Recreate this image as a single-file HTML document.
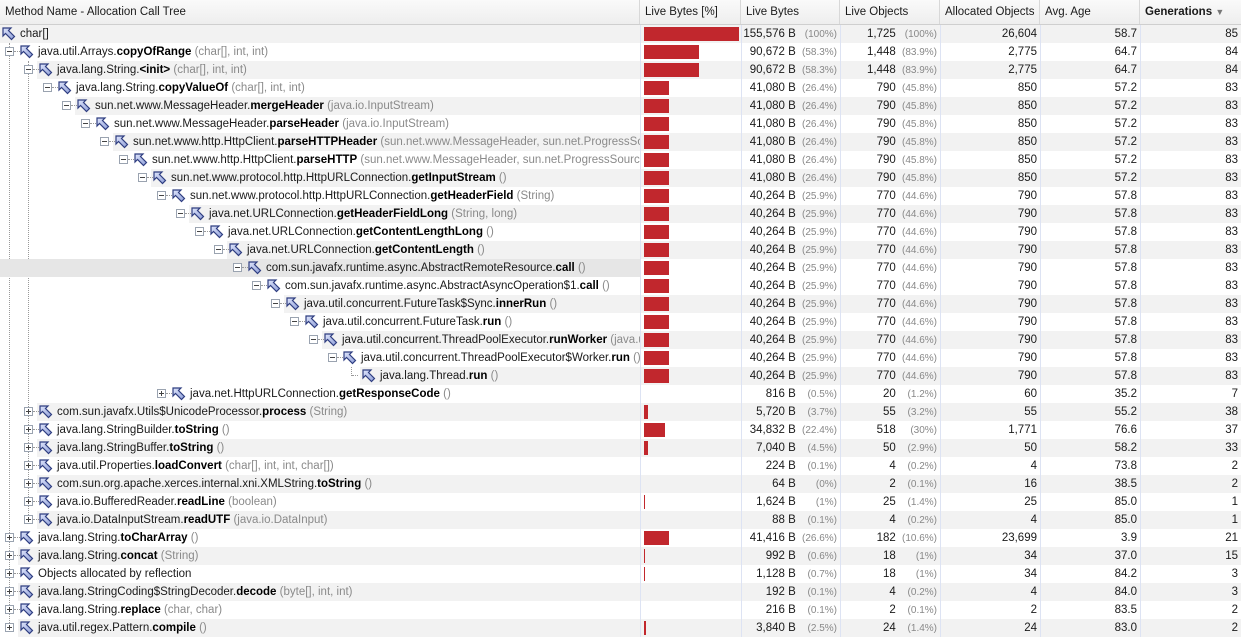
<!DOCTYPE html>
<html><head><meta charset="utf-8"><style>
*{margin:0;padding:0;box-sizing:border-box}
body{width:1241px;height:625px;overflow:hidden;background:#fff;font-family:"Liberation Sans",sans-serif;font-size:11.5px;color:#1a1a1a;position:relative}
.hd{position:absolute;top:0;left:0;width:1241px;height:25px;background:linear-gradient(#fafafa,#eeeeee);border-bottom:1px solid #cfcfcf}
.hd div{position:absolute;top:0;height:24px;line-height:25px;padding-left:5px;border-right:1px solid #d8d8d8}
.r{position:absolute;left:0;width:1241px;height:18px;line-height:18px}
.g .c,.g .tb{background:#f2f2f2}
.s .tb{background:#e6e6e6!important;left:0!important}
.tb{position:absolute;top:0;height:18px;right:601px}
.t{position:absolute;top:0;height:18px;white-space:nowrap;overflow:hidden}
.t svg{position:absolute;left:0;top:2px}
.t span.n{position:absolute;left:18px;top:0}
.a{color:#8a8a8a}
b{font-weight:bold;color:#000}
.c{position:absolute;top:0;height:18px;text-align:right;padding-right:3px;border-left:1px solid #dde3f3}
.p{display:inline-block;width:38px;text-align:right;color:#888;font-size:10px}
.bar{position:absolute;left:3px;top:2px;height:14px;background:#c1272d}
.ex{position:absolute;top:4px;width:9px;height:9px;border:1px solid #9aa3b0;background:#fff}
.ex:before{content:"";position:absolute;left:1px;top:3px;width:5px;height:1px;background:#444}
.ex.pl:after{content:"";position:absolute;left:3px;top:1px;width:1px;height:5px;background:#444}
.hl{position:absolute;top:8px;width:6px;border-top:1px dotted #999}
.vl{position:absolute;border-left:1px dotted #999;width:0}
</style></head><body>
<svg width="0" height="0" style="position:absolute"><defs><linearGradient id="gf" x1="0" y1="0" x2="1" y2="1"><stop offset="0" stop-color="#dfe5fb"/><stop offset="1" stop-color="#8e9ed8"/></linearGradient><symbol id="ic" viewBox="0 0 14 14"><path d="M1 1h8l-2.5 2.5 6 6-3 3-6-6L1 9z" fill="url(#gf)" stroke="#2e3d80" stroke-width="1.2"/></symbol></defs></svg>
<div class="hd">
<div style="left:0;width:640px">Method Name - Allocation Call Tree</div>
<div style="left:640px;width:101px">Live Bytes [%]</div>
<div style="left:741px;width:99px">Live Bytes</div>
<div style="left:840px;width:100px">Live Objects</div>
<div style="left:940px;width:100px">Allocated Objects</div>
<div style="left:1040px;width:100px">Avg. Age</div>
<div style="left:1140px;width:101px;font-weight:bold;border-right:none">Generations <span style="color:#777;font-size:9px">▼</span></div>
</div>
<div class="vl" style="left:9px;top:43px;height:582px"></div>
<div class="vl" style="left:28px;top:61px;height:460px"></div>

<div class="r g" style="top:25px"><div class="tb" style="left:0"></div><div class="t" style="left:2px;width:638px"><svg width="14" height="14"><use href="#ic"/></svg><span class="n">char[]</span></div><div class="c" style="left:640px;width:101px"><div class="bar" style="width:95px"></div></div><div class="c" style="left:741px;width:99px">155,576 B <span class="p">(100%)</span></div><div class="c" style="left:840px;width:100px">1,725 <span class="p">(100%)</span></div><div class="c" style="left:940px;width:100px">26,604</div><div class="c" style="left:1040px;width:100px">58.7</div><div class="c" style="left:1140px;width:101px">85</div></div>

<div class="r" style="top:43px"><div class="ex" style="left:5px"></div><div class="hl" style="left:14px"></div><div class="t" style="left:20px;width:620px"><svg width="14" height="14"><use href="#ic"/></svg><span class="n">java.util.Arrays.<b>copyOfRange</b> <span class="a">(char[], int, int)</span></span></div><div class="c" style="left:640px;width:101px"><div class="bar" style="width:55px"></div></div><div class="c" style="left:741px;width:99px">90,672 B <span class="p">(58.3%)</span></div><div class="c" style="left:840px;width:100px">1,448 <span class="p">(83.9%)</span></div><div class="c" style="left:940px;width:100px">2,775</div><div class="c" style="left:1040px;width:100px">64.7</div><div class="c" style="left:1140px;width:101px">84</div></div>

<div class="r g" style="top:61px"><div class="tb" style="left:37px"></div><div class="ex" style="left:24px"></div><div class="hl" style="left:33px"></div><div class="t" style="left:39px;width:601px"><svg width="14" height="14"><use href="#ic"/></svg><span class="n">java.lang.String.<b>&lt;init&gt;</b> <span class="a">(char[], int, int)</span></span></div><div class="c" style="left:640px;width:101px"><div class="bar" style="width:55px"></div></div><div class="c" style="left:741px;width:99px">90,672 B <span class="p">(58.3%)</span></div><div class="c" style="left:840px;width:100px">1,448 <span class="p">(83.9%)</span></div><div class="c" style="left:940px;width:100px">2,775</div><div class="c" style="left:1040px;width:100px">64.7</div><div class="c" style="left:1140px;width:101px">84</div></div>

<div class="r" style="top:79px"><div class="ex" style="left:43px"></div><div class="hl" style="left:52px"></div><div class="t" style="left:58px;width:582px"><svg width="14" height="14"><use href="#ic"/></svg><span class="n">java.lang.String.<b>copyValueOf</b> <span class="a">(char[], int, int)</span></span></div><div class="c" style="left:640px;width:101px"><div class="bar" style="width:25px"></div></div><div class="c" style="left:741px;width:99px">41,080 B <span class="p">(26.4%)</span></div><div class="c" style="left:840px;width:100px">790 <span class="p">(45.8%)</span></div><div class="c" style="left:940px;width:100px">850</div><div class="c" style="left:1040px;width:100px">57.2</div><div class="c" style="left:1140px;width:101px">83</div></div>

<div class="r g" style="top:97px"><div class="tb" style="left:75px"></div><div class="ex" style="left:62px"></div><div class="hl" style="left:71px"></div><div class="t" style="left:77px;width:563px"><svg width="14" height="14"><use href="#ic"/></svg><span class="n">sun.net.www.MessageHeader.<b>mergeHeader</b> <span class="a">(java.io.InputStream)</span></span></div><div class="c" style="left:640px;width:101px"><div class="bar" style="width:25px"></div></div><div class="c" style="left:741px;width:99px">41,080 B <span class="p">(26.4%)</span></div><div class="c" style="left:840px;width:100px">790 <span class="p">(45.8%)</span></div><div class="c" style="left:940px;width:100px">850</div><div class="c" style="left:1040px;width:100px">57.2</div><div class="c" style="left:1140px;width:101px">83</div></div>

<div class="r" style="top:115px"><div class="ex" style="left:81px"></div><div class="hl" style="left:90px"></div><div class="t" style="left:96px;width:544px"><svg width="14" height="14"><use href="#ic"/></svg><span class="n">sun.net.www.MessageHeader.<b>parseHeader</b> <span class="a">(java.io.InputStream)</span></span></div><div class="c" style="left:640px;width:101px"><div class="bar" style="width:25px"></div></div><div class="c" style="left:741px;width:99px">41,080 B <span class="p">(26.4%)</span></div><div class="c" style="left:840px;width:100px">790 <span class="p">(45.8%)</span></div><div class="c" style="left:940px;width:100px">850</div><div class="c" style="left:1040px;width:100px">57.2</div><div class="c" style="left:1140px;width:101px">83</div></div>

<div class="r g" style="top:133px"><div class="tb" style="left:113px"></div><div class="ex" style="left:100px"></div><div class="hl" style="left:109px"></div><div class="t" style="left:115px;width:525px"><svg width="14" height="14"><use href="#ic"/></svg><span class="n">sun.net.www.http.HttpClient.<b>parseHTTPHeader</b> <span class="a">(sun.net.www.MessageHeader, sun.net.ProgressSource)</span></span></div><div class="c" style="left:640px;width:101px"><div class="bar" style="width:25px"></div></div><div class="c" style="left:741px;width:99px">41,080 B <span class="p">(26.4%)</span></div><div class="c" style="left:840px;width:100px">790 <span class="p">(45.8%)</span></div><div class="c" style="left:940px;width:100px">850</div><div class="c" style="left:1040px;width:100px">57.2</div><div class="c" style="left:1140px;width:101px">83</div></div>

<div class="r" style="top:151px"><div class="ex" style="left:119px"></div><div class="hl" style="left:128px"></div><div class="t" style="left:134px;width:506px"><svg width="14" height="14"><use href="#ic"/></svg><span class="n">sun.net.www.http.HttpClient.<b>parseHTTP</b> <span class="a">(sun.net.www.MessageHeader, sun.net.ProgressSource, sun</span></span></div><div class="c" style="left:640px;width:101px"><div class="bar" style="width:25px"></div></div><div class="c" style="left:741px;width:99px">41,080 B <span class="p">(26.4%)</span></div><div class="c" style="left:840px;width:100px">790 <span class="p">(45.8%)</span></div><div class="c" style="left:940px;width:100px">850</div><div class="c" style="left:1040px;width:100px">57.2</div><div class="c" style="left:1140px;width:101px">83</div></div>

<div class="r g" style="top:169px"><div class="tb" style="left:151px"></div><div class="ex" style="left:138px"></div><div class="hl" style="left:147px"></div><div class="t" style="left:153px;width:487px"><svg width="14" height="14"><use href="#ic"/></svg><span class="n">sun.net.www.protocol.http.HttpURLConnection.<b>getInputStream</b> <span class="a">()</span></span></div><div class="c" style="left:640px;width:101px"><div class="bar" style="width:25px"></div></div><div class="c" style="left:741px;width:99px">41,080 B <span class="p">(26.4%)</span></div><div class="c" style="left:840px;width:100px">790 <span class="p">(45.8%)</span></div><div class="c" style="left:940px;width:100px">850</div><div class="c" style="left:1040px;width:100px">57.2</div><div class="c" style="left:1140px;width:101px">83</div></div>

<div class="r" style="top:187px"><div class="ex" style="left:157px"></div><div class="hl" style="left:166px"></div><div class="t" style="left:172px;width:468px"><svg width="14" height="14"><use href="#ic"/></svg><span class="n">sun.net.www.protocol.http.HttpURLConnection.<b>getHeaderField</b> <span class="a">(String)</span></span></div><div class="c" style="left:640px;width:101px"><div class="bar" style="width:25px"></div></div><div class="c" style="left:741px;width:99px">40,264 B <span class="p">(25.9%)</span></div><div class="c" style="left:840px;width:100px">770 <span class="p">(44.6%)</span></div><div class="c" style="left:940px;width:100px">790</div><div class="c" style="left:1040px;width:100px">57.8</div><div class="c" style="left:1140px;width:101px">83</div></div>

<div class="r g" style="top:205px"><div class="tb" style="left:189px"></div><div class="ex" style="left:176px"></div><div class="hl" style="left:185px"></div><div class="t" style="left:191px;width:449px"><svg width="14" height="14"><use href="#ic"/></svg><span class="n">java.net.URLConnection.<b>getHeaderFieldLong</b> <span class="a">(String, long)</span></span></div><div class="c" style="left:640px;width:101px"><div class="bar" style="width:25px"></div></div><div class="c" style="left:741px;width:99px">40,264 B <span class="p">(25.9%)</span></div><div class="c" style="left:840px;width:100px">770 <span class="p">(44.6%)</span></div><div class="c" style="left:940px;width:100px">790</div><div class="c" style="left:1040px;width:100px">57.8</div><div class="c" style="left:1140px;width:101px">83</div></div>

<div class="r" style="top:223px"><div class="ex" style="left:195px"></div><div class="hl" style="left:204px"></div><div class="t" style="left:210px;width:430px"><svg width="14" height="14"><use href="#ic"/></svg><span class="n">java.net.URLConnection.<b>getContentLengthLong</b> <span class="a">()</span></span></div><div class="c" style="left:640px;width:101px"><div class="bar" style="width:25px"></div></div><div class="c" style="left:741px;width:99px">40,264 B <span class="p">(25.9%)</span></div><div class="c" style="left:840px;width:100px">770 <span class="p">(44.6%)</span></div><div class="c" style="left:940px;width:100px">790</div><div class="c" style="left:1040px;width:100px">57.8</div><div class="c" style="left:1140px;width:101px">83</div></div>

<div class="r g" style="top:241px"><div class="tb" style="left:227px"></div><div class="ex" style="left:214px"></div><div class="hl" style="left:223px"></div><div class="t" style="left:229px;width:411px"><svg width="14" height="14"><use href="#ic"/></svg><span class="n">java.net.URLConnection.<b>getContentLength</b> <span class="a">()</span></span></div><div class="c" style="left:640px;width:101px"><div class="bar" style="width:25px"></div></div><div class="c" style="left:741px;width:99px">40,264 B <span class="p">(25.9%)</span></div><div class="c" style="left:840px;width:100px">770 <span class="p">(44.6%)</span></div><div class="c" style="left:940px;width:100px">790</div><div class="c" style="left:1040px;width:100px">57.8</div><div class="c" style="left:1140px;width:101px">83</div></div>

<div class="r s" style="top:259px"><div class="tb" style="left:0"></div><div class="ex" style="left:233px"></div><div class="hl" style="left:242px"></div><div class="t" style="left:248px;width:392px"><svg width="14" height="14"><use href="#ic"/></svg><span class="n">com.sun.javafx.runtime.async.AbstractRemoteResource.<b>call</b> <span class="a">()</span></span></div><div class="c" style="left:640px;width:101px"><div class="bar" style="width:25px"></div></div><div class="c" style="left:741px;width:99px">40,264 B <span class="p">(25.9%)</span></div><div class="c" style="left:840px;width:100px">770 <span class="p">(44.6%)</span></div><div class="c" style="left:940px;width:100px">790</div><div class="c" style="left:1040px;width:100px">57.8</div><div class="c" style="left:1140px;width:101px">83</div></div>

<div class="r" style="top:277px"><div class="ex" style="left:252px"></div><div class="hl" style="left:261px"></div><div class="t" style="left:267px;width:373px"><svg width="14" height="14"><use href="#ic"/></svg><span class="n">com.sun.javafx.runtime.async.AbstractAsyncOperation$1.<b>call</b> <span class="a">()</span></span></div><div class="c" style="left:640px;width:101px"><div class="bar" style="width:25px"></div></div><div class="c" style="left:741px;width:99px">40,264 B <span class="p">(25.9%)</span></div><div class="c" style="left:840px;width:100px">770 <span class="p">(44.6%)</span></div><div class="c" style="left:940px;width:100px">790</div><div class="c" style="left:1040px;width:100px">57.8</div><div class="c" style="left:1140px;width:101px">83</div></div>

<div class="r g" style="top:295px"><div class="tb" style="left:284px"></div><div class="ex" style="left:271px"></div><div class="hl" style="left:280px"></div><div class="t" style="left:286px;width:354px"><svg width="14" height="14"><use href="#ic"/></svg><span class="n">java.util.concurrent.FutureTask$Sync.<b>innerRun</b> <span class="a">()</span></span></div><div class="c" style="left:640px;width:101px"><div class="bar" style="width:25px"></div></div><div class="c" style="left:741px;width:99px">40,264 B <span class="p">(25.9%)</span></div><div class="c" style="left:840px;width:100px">770 <span class="p">(44.6%)</span></div><div class="c" style="left:940px;width:100px">790</div><div class="c" style="left:1040px;width:100px">57.8</div><div class="c" style="left:1140px;width:101px">83</div></div>

<div class="r" style="top:313px"><div class="ex" style="left:290px"></div><div class="hl" style="left:299px"></div><div class="t" style="left:305px;width:335px"><svg width="14" height="14"><use href="#ic"/></svg><span class="n">java.util.concurrent.FutureTask.<b>run</b> <span class="a">()</span></span></div><div class="c" style="left:640px;width:101px"><div class="bar" style="width:25px"></div></div><div class="c" style="left:741px;width:99px">40,264 B <span class="p">(25.9%)</span></div><div class="c" style="left:840px;width:100px">770 <span class="p">(44.6%)</span></div><div class="c" style="left:940px;width:100px">790</div><div class="c" style="left:1040px;width:100px">57.8</div><div class="c" style="left:1140px;width:101px">83</div></div>

<div class="r g" style="top:331px"><div class="tb" style="left:322px"></div><div class="ex" style="left:309px"></div><div class="hl" style="left:318px"></div><div class="t" style="left:324px;width:316px"><svg width="14" height="14"><use href="#ic"/></svg><span class="n">java.util.concurrent.ThreadPoolExecutor.<b>runWorker</b> <span class="a">(java.util.concurrent)</span></span></div><div class="c" style="left:640px;width:101px"><div class="bar" style="width:25px"></div></div><div class="c" style="left:741px;width:99px">40,264 B <span class="p">(25.9%)</span></div><div class="c" style="left:840px;width:100px">770 <span class="p">(44.6%)</span></div><div class="c" style="left:940px;width:100px">790</div><div class="c" style="left:1040px;width:100px">57.8</div><div class="c" style="left:1140px;width:101px">83</div></div>

<div class="r" style="top:349px"><div class="ex" style="left:328px"></div><div class="hl" style="left:337px"></div><div class="t" style="left:343px;width:297px"><svg width="14" height="14"><use href="#ic"/></svg><span class="n">java.util.concurrent.ThreadPoolExecutor$Worker.<b>run</b> <span class="a">()</span></span></div><div class="c" style="left:640px;width:101px"><div class="bar" style="width:25px"></div></div><div class="c" style="left:741px;width:99px">40,264 B <span class="p">(25.9%)</span></div><div class="c" style="left:840px;width:100px">770 <span class="p">(44.6%)</span></div><div class="c" style="left:940px;width:100px">790</div><div class="c" style="left:1040px;width:100px">57.8</div><div class="c" style="left:1140px;width:101px">83</div></div>

<div class="r g" style="top:367px"><div class="tb" style="left:360px"></div><div class="vl" style="left:351px;top:0;height:9px"></div><div class="hl" style="left:352px"></div><div class="t" style="left:362px;width:278px"><svg width="14" height="14"><use href="#ic"/></svg><span class="n">java.lang.Thread.<b>run</b> <span class="a">()</span></span></div><div class="c" style="left:640px;width:101px"><div class="bar" style="width:25px"></div></div><div class="c" style="left:741px;width:99px">40,264 B <span class="p">(25.9%)</span></div><div class="c" style="left:840px;width:100px">770 <span class="p">(44.6%)</span></div><div class="c" style="left:940px;width:100px">790</div><div class="c" style="left:1040px;width:100px">57.8</div><div class="c" style="left:1140px;width:101px">83</div></div>

<div class="r" style="top:385px"><div class="ex pl" style="left:157px"></div><div class="hl" style="left:166px"></div><div class="t" style="left:172px;width:468px"><svg width="14" height="14"><use href="#ic"/></svg><span class="n">java.net.HttpURLConnection.<b>getResponseCode</b> <span class="a">()</span></span></div><div class="c" style="left:640px;width:101px"></div><div class="c" style="left:741px;width:99px">816 B <span class="p">(0.5%)</span></div><div class="c" style="left:840px;width:100px">20 <span class="p">(1.2%)</span></div><div class="c" style="left:940px;width:100px">60</div><div class="c" style="left:1040px;width:100px">35.2</div><div class="c" style="left:1140px;width:101px">7</div></div>

<div class="r g" style="top:403px"><div class="tb" style="left:37px"></div><div class="ex pl" style="left:24px"></div><div class="hl" style="left:33px"></div><div class="t" style="left:39px;width:601px"><svg width="14" height="14"><use href="#ic"/></svg><span class="n">com.sun.javafx.Utils$UnicodeProcessor.<b>process</b> <span class="a">(String)</span></span></div><div class="c" style="left:640px;width:101px"><div class="bar" style="width:4px"></div></div><div class="c" style="left:741px;width:99px">5,720 B <span class="p">(3.7%)</span></div><div class="c" style="left:840px;width:100px">55 <span class="p">(3.2%)</span></div><div class="c" style="left:940px;width:100px">55</div><div class="c" style="left:1040px;width:100px">55.2</div><div class="c" style="left:1140px;width:101px">38</div></div>

<div class="r" style="top:421px"><div class="ex pl" style="left:24px"></div><div class="hl" style="left:33px"></div><div class="t" style="left:39px;width:601px"><svg width="14" height="14"><use href="#ic"/></svg><span class="n">java.lang.StringBuilder.<b>toString</b> <span class="a">()</span></span></div><div class="c" style="left:640px;width:101px"><div class="bar" style="width:21px"></div></div><div class="c" style="left:741px;width:99px">34,832 B <span class="p">(22.4%)</span></div><div class="c" style="left:840px;width:100px">518 <span class="p">(30%)</span></div><div class="c" style="left:940px;width:100px">1,771</div><div class="c" style="left:1040px;width:100px">76.6</div><div class="c" style="left:1140px;width:101px">37</div></div>

<div class="r g" style="top:439px"><div class="tb" style="left:37px"></div><div class="ex pl" style="left:24px"></div><div class="hl" style="left:33px"></div><div class="t" style="left:39px;width:601px"><svg width="14" height="14"><use href="#ic"/></svg><span class="n">java.lang.StringBuffer.<b>toString</b> <span class="a">()</span></span></div><div class="c" style="left:640px;width:101px"><div class="bar" style="width:4px"></div></div><div class="c" style="left:741px;width:99px">7,040 B <span class="p">(4.5%)</span></div><div class="c" style="left:840px;width:100px">50 <span class="p">(2.9%)</span></div><div class="c" style="left:940px;width:100px">50</div><div class="c" style="left:1040px;width:100px">58.2</div><div class="c" style="left:1140px;width:101px">33</div></div>

<div class="r" style="top:457px"><div class="ex pl" style="left:24px"></div><div class="hl" style="left:33px"></div><div class="t" style="left:39px;width:601px"><svg width="14" height="14"><use href="#ic"/></svg><span class="n">java.util.Properties.<b>loadConvert</b> <span class="a">(char[], int, int, char[])</span></span></div><div class="c" style="left:640px;width:101px"></div><div class="c" style="left:741px;width:99px">224 B <span class="p">(0.1%)</span></div><div class="c" style="left:840px;width:100px">4 <span class="p">(0.2%)</span></div><div class="c" style="left:940px;width:100px">4</div><div class="c" style="left:1040px;width:100px">73.8</div><div class="c" style="left:1140px;width:101px">2</div></div>

<div class="r g" style="top:475px"><div class="tb" style="left:37px"></div><div class="ex pl" style="left:24px"></div><div class="hl" style="left:33px"></div><div class="t" style="left:39px;width:601px"><svg width="14" height="14"><use href="#ic"/></svg><span class="n">com.sun.org.apache.xerces.internal.xni.XMLString.<b>toString</b> <span class="a">()</span></span></div><div class="c" style="left:640px;width:101px"></div><div class="c" style="left:741px;width:99px">64 B <span class="p">(0%)</span></div><div class="c" style="left:840px;width:100px">2 <span class="p">(0.1%)</span></div><div class="c" style="left:940px;width:100px">16</div><div class="c" style="left:1040px;width:100px">38.5</div><div class="c" style="left:1140px;width:101px">2</div></div>

<div class="r" style="top:493px"><div class="ex pl" style="left:24px"></div><div class="hl" style="left:33px"></div><div class="t" style="left:39px;width:601px"><svg width="14" height="14"><use href="#ic"/></svg><span class="n">java.io.BufferedReader.<b>readLine</b> <span class="a">(boolean)</span></span></div><div class="c" style="left:640px;width:101px"><div class="bar" style="width:1px"></div></div><div class="c" style="left:741px;width:99px">1,624 B <span class="p">(1%)</span></div><div class="c" style="left:840px;width:100px">25 <span class="p">(1.4%)</span></div><div class="c" style="left:940px;width:100px">25</div><div class="c" style="left:1040px;width:100px">85.0</div><div class="c" style="left:1140px;width:101px">1</div></div>

<div class="r g" style="top:511px"><div class="tb" style="left:37px"></div><div class="ex pl" style="left:24px"></div><div class="hl" style="left:33px"></div><div class="t" style="left:39px;width:601px"><svg width="14" height="14"><use href="#ic"/></svg><span class="n">java.io.DataInputStream.<b>readUTF</b> <span class="a">(java.io.DataInput)</span></span></div><div class="c" style="left:640px;width:101px"></div><div class="c" style="left:741px;width:99px">88 B <span class="p">(0.1%)</span></div><div class="c" style="left:840px;width:100px">4 <span class="p">(0.2%)</span></div><div class="c" style="left:940px;width:100px">4</div><div class="c" style="left:1040px;width:100px">85.0</div><div class="c" style="left:1140px;width:101px">1</div></div>

<div class="r" style="top:529px"><div class="ex pl" style="left:5px"></div><div class="hl" style="left:14px"></div><div class="t" style="left:20px;width:620px"><svg width="14" height="14"><use href="#ic"/></svg><span class="n">java.lang.String.<b>toCharArray</b> <span class="a">()</span></span></div><div class="c" style="left:640px;width:101px"><div class="bar" style="width:25px"></div></div><div class="c" style="left:741px;width:99px">41,416 B <span class="p">(26.6%)</span></div><div class="c" style="left:840px;width:100px">182 <span class="p">(10.6%)</span></div><div class="c" style="left:940px;width:100px">23,699</div><div class="c" style="left:1040px;width:100px">3.9</div><div class="c" style="left:1140px;width:101px">21</div></div>

<div class="r g" style="top:547px"><div class="tb" style="left:18px"></div><div class="ex pl" style="left:5px"></div><div class="hl" style="left:14px"></div><div class="t" style="left:20px;width:620px"><svg width="14" height="14"><use href="#ic"/></svg><span class="n">java.lang.String.<b>concat</b> <span class="a">(String)</span></span></div><div class="c" style="left:640px;width:101px"><div class="bar" style="width:1px"></div></div><div class="c" style="left:741px;width:99px">992 B <span class="p">(0.6%)</span></div><div class="c" style="left:840px;width:100px">18 <span class="p">(1%)</span></div><div class="c" style="left:940px;width:100px">34</div><div class="c" style="left:1040px;width:100px">37.0</div><div class="c" style="left:1140px;width:101px">15</div></div>

<div class="r" style="top:565px"><div class="ex pl" style="left:5px"></div><div class="hl" style="left:14px"></div><div class="t" style="left:20px;width:620px"><svg width="14" height="14"><use href="#ic"/></svg><span class="n">Objects allocated by reflection</span></div><div class="c" style="left:640px;width:101px"><div class="bar" style="width:1px"></div></div><div class="c" style="left:741px;width:99px">1,128 B <span class="p">(0.7%)</span></div><div class="c" style="left:840px;width:100px">18 <span class="p">(1%)</span></div><div class="c" style="left:940px;width:100px">34</div><div class="c" style="left:1040px;width:100px">84.2</div><div class="c" style="left:1140px;width:101px">3</div></div>

<div class="r g" style="top:583px"><div class="tb" style="left:18px"></div><div class="ex pl" style="left:5px"></div><div class="hl" style="left:14px"></div><div class="t" style="left:20px;width:620px"><svg width="14" height="14"><use href="#ic"/></svg><span class="n">java.lang.StringCoding$StringDecoder.<b>decode</b> <span class="a">(byte[], int, int)</span></span></div><div class="c" style="left:640px;width:101px"></div><div class="c" style="left:741px;width:99px">192 B <span class="p">(0.1%)</span></div><div class="c" style="left:840px;width:100px">4 <span class="p">(0.2%)</span></div><div class="c" style="left:940px;width:100px">4</div><div class="c" style="left:1040px;width:100px">84.0</div><div class="c" style="left:1140px;width:101px">3</div></div>

<div class="r" style="top:601px"><div class="ex pl" style="left:5px"></div><div class="hl" style="left:14px"></div><div class="t" style="left:20px;width:620px"><svg width="14" height="14"><use href="#ic"/></svg><span class="n">java.lang.String.<b>replace</b> <span class="a">(char, char)</span></span></div><div class="c" style="left:640px;width:101px"></div><div class="c" style="left:741px;width:99px">216 B <span class="p">(0.1%)</span></div><div class="c" style="left:840px;width:100px">2 <span class="p">(0.1%)</span></div><div class="c" style="left:940px;width:100px">2</div><div class="c" style="left:1040px;width:100px">83.5</div><div class="c" style="left:1140px;width:101px">2</div></div>

<div class="r g" style="top:619px"><div class="tb" style="left:18px"></div><div class="ex pl" style="left:5px"></div><div class="t" style="left:20px;width:620px"><svg width="14" height="14"><use href="#ic"/></svg><span class="n">java.util.regex.Pattern.<b>compile</b> <span class="a">()</span></span></div><div class="c" style="left:640px;width:101px"><div class="bar" style="width:2px"></div></div><div class="c" style="left:741px;width:99px">3,840 B <span class="p">(2.5%)</span></div><div class="c" style="left:840px;width:100px">24 <span class="p">(1.4%)</span></div><div class="c" style="left:940px;width:100px">24</div><div class="c" style="left:1040px;width:100px">83.0</div><div class="c" style="left:1140px;width:101px">2</div></div>
</body></html>
